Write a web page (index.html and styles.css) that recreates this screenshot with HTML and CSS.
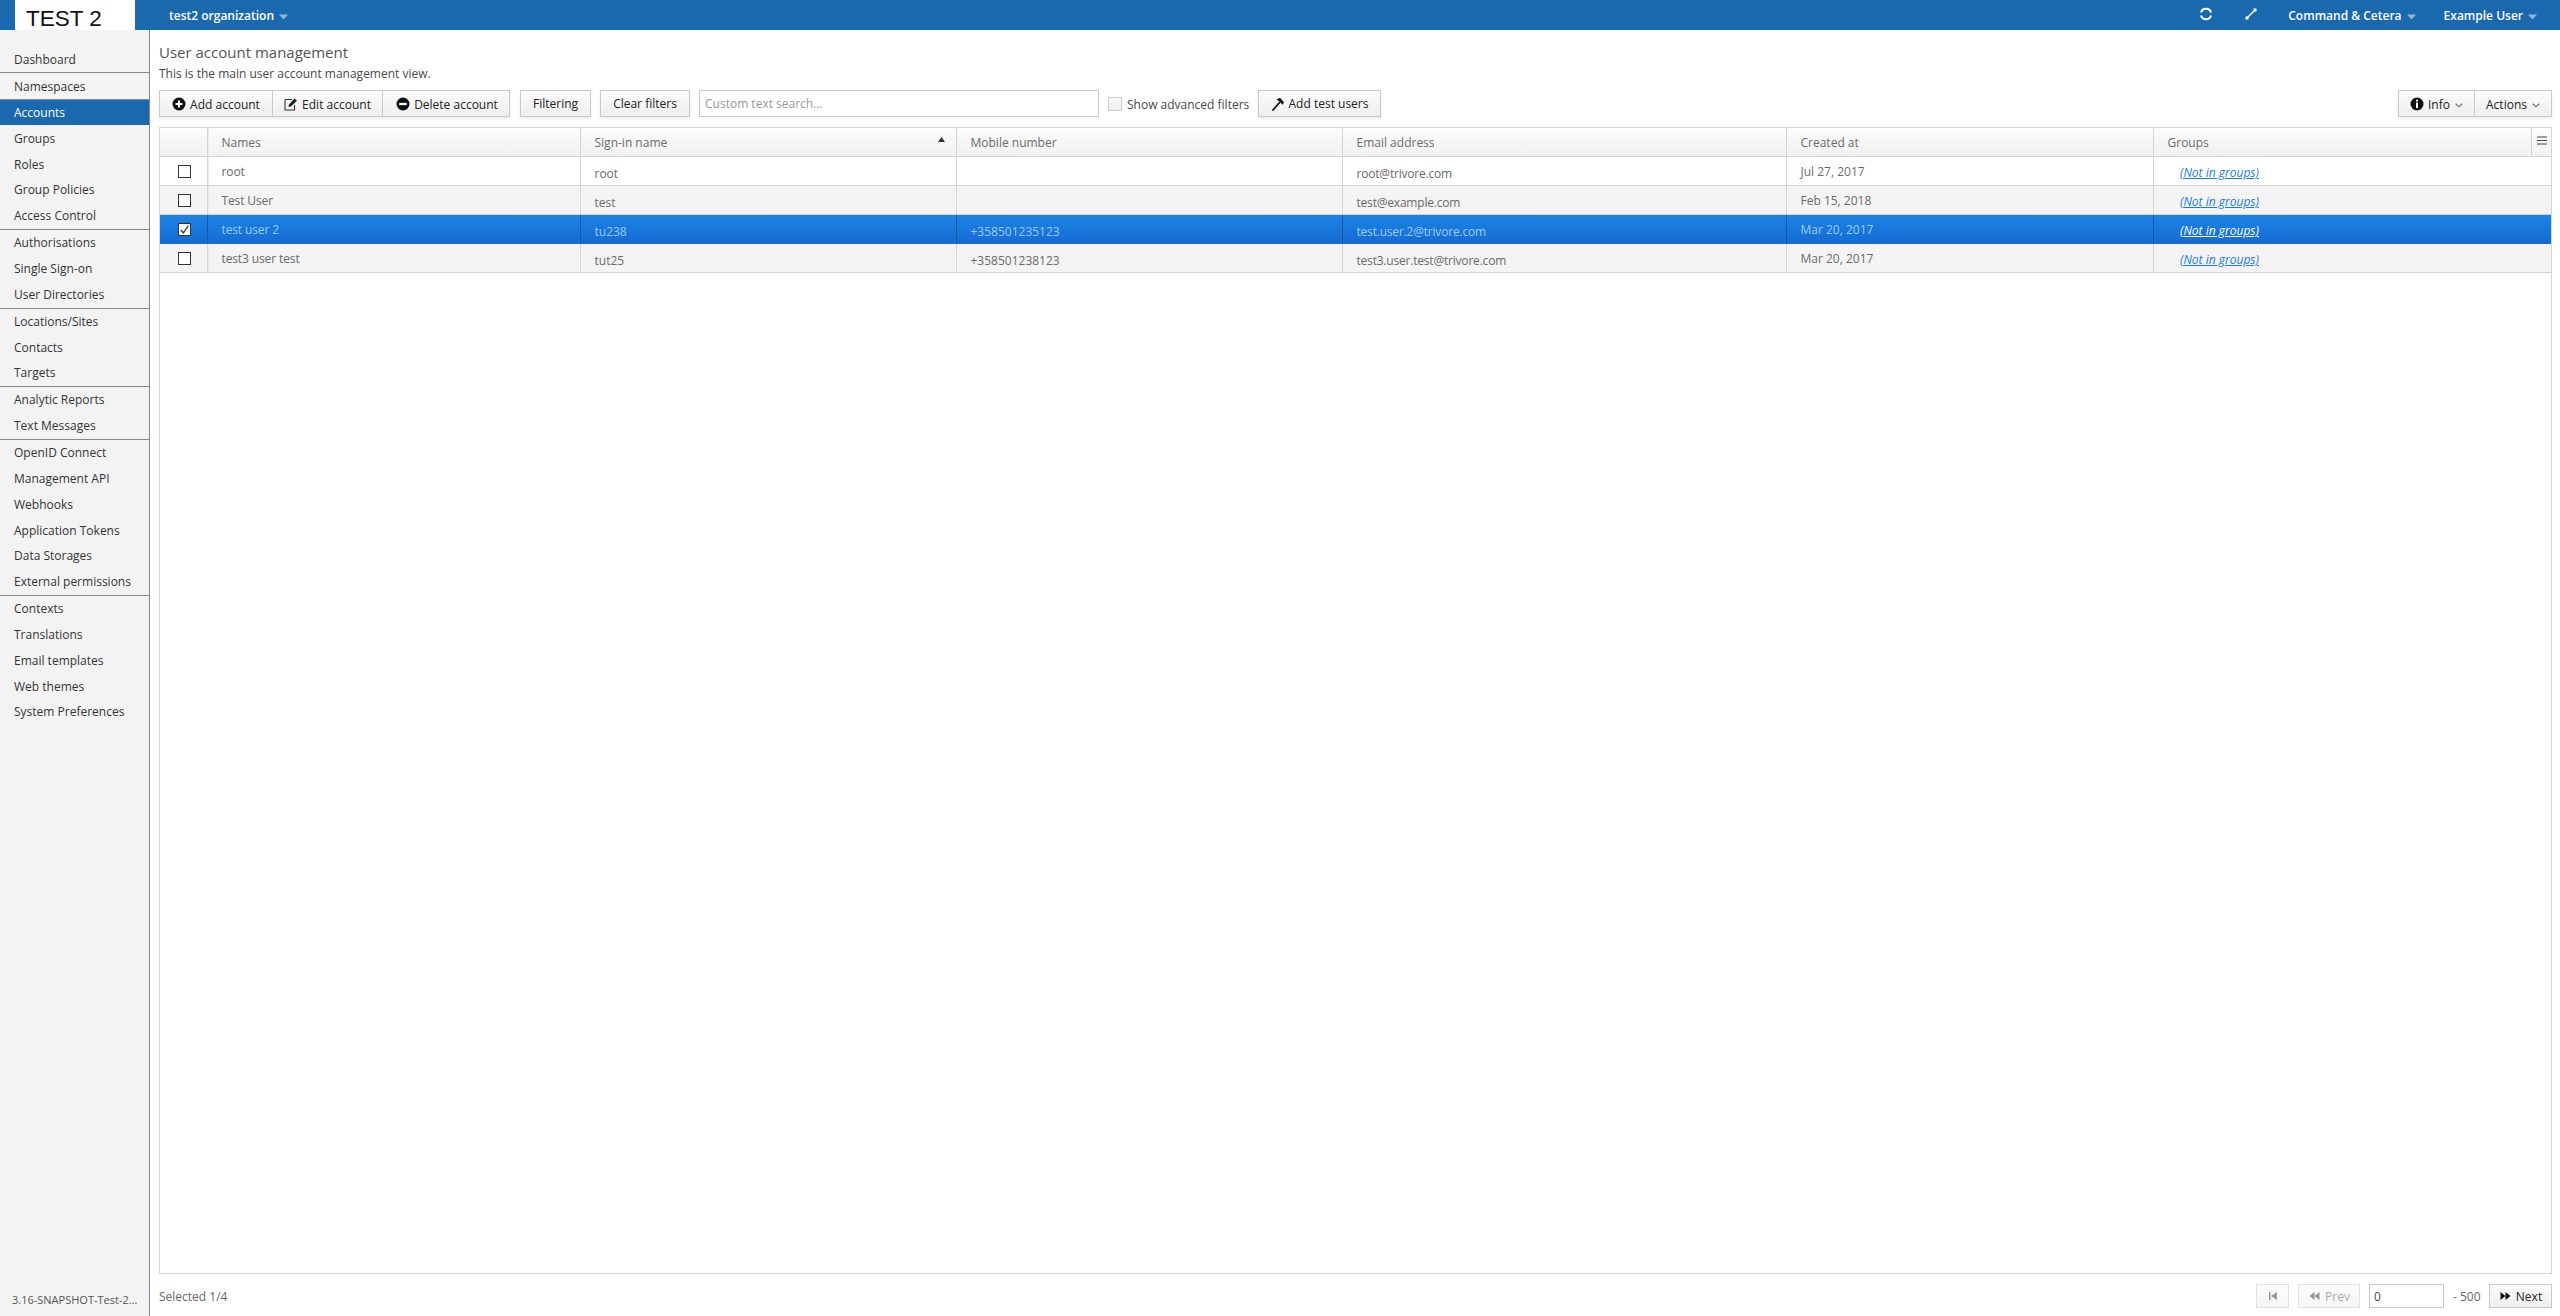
FILE: index.html
```html
<!DOCTYPE html>
<html lang="en">
<head>
<meta charset="utf-8">
<title>User account management</title>
<link rel="stylesheet" href="styles.css">
</head>
<body>
<header class="topbar">
  <div class="logo">TEST 2</div>
  <div class="top-item org">test2 organization<svg class="caret" viewBox="0 0 9 6"><path d="M0 0.5h9L4.500 5.500z"/></svg></div>
  <div class="top-right">
    <svg class="top-icon" viewBox="0 0 14 14"><path d="M2 5.500A5.200 5.200 0 0 1 12 5.500M12 8.500A5.200 5.200 0 0 1 2 8.500" fill="none" stroke="#fff" stroke-width="2"/></svg>
    <svg class="top-icon" viewBox="0 0 14 14"><path d="M3 11L11 3" stroke="#fff" stroke-width="1.500"/><path d="M9.500 1.500h3v3h-3zM1.500 9.500h3v3h-3z" fill="#fff"/></svg>
    <div class="top-item">Command &amp; Cetera<svg class="caret" viewBox="0 0 9 6"><path d="M0 0.5h9L4.500 5.500z"/></svg></div>
    <div class="top-item">Example User<svg class="caret" viewBox="0 0 9 6"><path d="M0 0.5h9L4.500 5.500z"/></svg></div>
  </div>
</header>
<div class="main">
  <aside class="sidebar">
    <nav class="nav">
      <a class="nav-item">Dashboard</a>
      <a class="nav-item sep">Namespaces</a>
      <a class="nav-item sep active">Accounts</a>
      <a class="nav-item">Groups</a>
      <a class="nav-item">Roles</a>
      <a class="nav-item">Group Policies</a>
      <a class="nav-item">Access Control</a>
      <a class="nav-item sep">Authorisations</a>
      <a class="nav-item">Single Sign-on</a>
      <a class="nav-item">User Directories</a>
      <a class="nav-item sep">Locations/Sites</a>
      <a class="nav-item">Contacts</a>
      <a class="nav-item">Targets</a>
      <a class="nav-item sep">Analytic Reports</a>
      <a class="nav-item">Text Messages</a>
      <a class="nav-item sep">OpenID Connect</a>
      <a class="nav-item">Management API</a>
      <a class="nav-item">Webhooks</a>
      <a class="nav-item">Application Tokens</a>
      <a class="nav-item">Data Storages</a>
      <a class="nav-item">External permissions</a>
      <a class="nav-item sep">Contexts</a>
      <a class="nav-item">Translations</a>
      <a class="nav-item">Email templates</a>
      <a class="nav-item">Web themes</a>
      <a class="nav-item">System Preferences</a>
    </nav>
    <div class="version">3.16-SNAPSHOT-Test-2...</div>
  </aside>
  <section class="content">
    <h1 class="title">User account management</h1>
    <p class="subtitle">This is the main user account management view.</p>
    <div class="toolbar">
      <div class="btn-group">
        <button class="btn w-add"><svg class="ico" viewBox="0 0 14 14"><circle cx="7" cy="7" r="6.500" fill="#111"/><path d="M7 3.500v7M3.500 7h7" stroke="#fff" stroke-width="2"/></svg>Add account</button>
        <button class="btn w-edit"><svg class="ico" viewBox="0 0 14 14"><path d="M1 2.500h7M1 2.500v10.500h9.500V8" fill="none" stroke="#333" stroke-width="1.100"/><path d="M4.500 10L5 7.500 10.500 1.500 13 3.800 7 9.500z" fill="#222"/></svg>Edit account</button>
        <button class="btn w-del"><svg class="ico" viewBox="0 0 14 14"><circle cx="7" cy="7" r="6.500" fill="#111"/><path d="M3.200 7h7.600" stroke="#fff" stroke-width="2.200"/></svg>Delete account</button>
      </div>
      <button class="btn solo w-filter">Filtering</button>
      <button class="btn solo w-clear">Clear filters</button>
      <input class="search" type="text" placeholder="Custom text search...">
      <label class="check-label"><span class="fake-check"></span>Show advanced filters</label>
      <button class="btn solo w-test"><svg class="ico" viewBox="0 0 14 14"><path d="M1.500 13.500L9 5" stroke="#111" stroke-width="1.800" fill="none"/><path d="M5.500 2.500L9 0.800l4 4.700-1.500 2.300L9 5z" fill="#111"/></svg>Add test users</button>
      <div class="btn-group push">
        <button class="btn w-info"><svg class="ico" viewBox="0 0 14 14"><circle cx="7" cy="7" r="6.500" fill="#111"/><path d="M7 5.500v5.500M7 2.800v1.600" stroke="#fff" stroke-width="2"/></svg>Info<svg class="chev" viewBox="0 0 8 5"><path d="M0.700 0.700L4 3.800 7.300 0.700" fill="none" stroke="#777" stroke-width="1.200"/></svg></button>
        <button class="btn w-actions">Actions<svg class="chev" viewBox="0 0 8 5"><path d="M0.700 0.700L4 3.800 7.300 0.700" fill="none" stroke="#777" stroke-width="1.200"/></svg></button>
      </div>
    </div>
    <div class="grid">
      <div class="row head">
        <div class="cell"></div>
        <div class="cell">Names</div>
        <div class="cell sorted">Sign-in name<svg class="sort" viewBox="0 0 7 5"><path d="M3.500 0L7 5H0z"/></svg></div>
        <div class="cell">Mobile number</div>
        <div class="cell">Email address</div>
        <div class="cell">Created at</div>
        <div class="cell">Groups</div>
        <div class="cell menu"><svg class="burger" viewBox="0 0 10 9"><path d="M0 1h10M0 4.500h10M0 8h10" stroke="#444" stroke-width="1"/></svg></div>
      </div>
      <div class="row">
        <div class="cell check"><span class="box"></span></div>
        <div class="cell up">root</div>
        <div class="cell">root</div>
        <div class="cell"></div>
        <div class="cell">root@trivore.com</div>
        <div class="cell up">Jul 27, 2017</div>
        <div class="cell link"><a>(Not in groups)</a></div>
      </div>
      <div class="row odd">
        <div class="cell check"><span class="box"></span></div>
        <div class="cell up">Test User</div>
        <div class="cell">test</div>
        <div class="cell"></div>
        <div class="cell">test@example.com</div>
        <div class="cell up">Feb 15, 2018</div>
        <div class="cell link"><a>(Not in groups)</a></div>
      </div>
      <div class="row selected">
        <div class="cell check"><span class="box"><svg class="tick" viewBox="0 0 10 10"><path d="M1.500 5.500L4 8 8.500 1.500" fill="none" stroke="#444" stroke-width="1.300"/></svg></span></div>
        <div class="cell up">test user 2</div>
        <div class="cell">tu238</div>
        <div class="cell">+358501235123</div>
        <div class="cell">test.user.2@trivore.com</div>
        <div class="cell up">Mar 20, 2017</div>
        <div class="cell link"><a>(Not in groups)</a></div>
      </div>
      <div class="row odd">
        <div class="cell check"><span class="box"></span></div>
        <div class="cell up">test3 user test</div>
        <div class="cell">tut25</div>
        <div class="cell">+358501238123</div>
        <div class="cell">test3.user.test@trivore.com</div>
        <div class="cell up">Mar 20, 2017</div>
        <div class="cell link"><a>(Not in groups)</a></div>
      </div>
    </div>
    <footer class="footer">
      <span class="selected-count">Selected 1/4</span>
      <div class="pager">
        <button class="btn small disabled w-first"><svg class="ico-sm" viewBox="0 0 10 10"><path d="M1 1h1.500v8H1zM9 1v8L3 5z"/></svg></button>
        <button class="btn small disabled w-prev"><svg class="ico-sm wide" viewBox="0 0 12 10"><path d="M6 1v8L1 5zM11 1v8L6 5z"/></svg>Prev</button>
        <input class="page-input" type="text" value="0">
        <span class="page-total">- 500</span>
        <button class="btn small w-next"><svg class="ico-sm wide" viewBox="0 0 12 10"><path d="M1 1v8l5-4zM6 1v8l5-4z"/></svg>Next</button>
      </div>
    </footer>
  </section>
</div>
</body>
</html>
```
FILE: styles.css
```css
* { box-sizing: border-box; }
html, body { height: 100%; }
body {
  margin: 0;
  height: 1316px;
  display: flex;
  flex-direction: column;
  overflow: hidden;
  font-family: "Open Sans", sans-serif;
  font-size: 12px;
  color: #474747;
  background: #fff;
}
.topbar {
  height: 30px;
  flex: none;
  display: flex;
  align-items: center;
  background: #1a69ae;
  color: #fff;
  padding-left: 15px;
}
.logo {
  width: 120px;
  height: 30px;
  background: #fff;
  color: #111;
  font-family: "Liberation Sans", sans-serif;
  font-size: 22.5px;
  line-height: 37px;
  padding-left: 11px;
}
.top-item {
  display: flex;
  align-items: center;
  font-weight: 600;
  font-size: 12px;
  line-height: 30px;
  padding-top: 1px;
  white-space: nowrap;
}
.org { margin-left: 34px; }
.caret { width: 9px; height: 6px; margin-left: 5px; fill: #8fb7dc; margin-top: 2px; }
.top-right {
  margin-left: auto;
  display: flex;
  align-items: center;
  padding-right: 23px;
}
.top-icon { width: 14px; height: 14px; margin-top: -2px; }
.top-icon + .top-icon { margin-left: 31px; }
.top-icon + .top-item { margin-left: 30px; }
.top-item + .top-item { margin-left: 28px; }
.main { flex: 1; display: flex; min-height: 0; }
.sidebar {
  width: 150px;
  flex: none;
  background: #f3f3f3;
  border-right: 1px solid #888;
  display: flex;
  flex-direction: column;
  padding-top: 16px;
}
.nav { display: flex; flex-direction: column; flex: 1; }
.nav-item {
  height: 25.800px;
  line-height: 25.800px;
  padding-left: 14px;
  color: #333;
  white-space: nowrap;
}
.nav-item.sep { border-top: 1px solid #888; height: 27px; }
.nav-item:first-child, .nav-item:nth-child(2) { padding-top: 1px; }
.nav-item.active {
  background: #1a69ae;
  color: #fff;
  height: 26px;
  margin-bottom: 1px;
}
.version {
  height: 28px;
  padding-left: 12px;
  color: #555;
  font-size: 11px;
  line-height: 24px;
}
.content {
  flex: 1;
  min-width: 0;
  display: flex;
  flex-direction: column;
  padding: 0 9px 0 9px;
}
.title {
  margin: 10px 0 0;
  height: 24px;
  font-size: 15px;
  font-weight: 400;
  line-height: 24px;
  color: #555;
}
.subtitle {
  margin: 0;
  height: 20px;
  font-size: 12px;
  line-height: 20px;
  color: #474747;
}
.toolbar {
  margin-top: 6px;
  height: 27px;
  display: flex;
  align-items: stretch;
}
.btn-group { display: flex; box-shadow: 0 2px 3px rgba(0,0,0,.08); }
.btn-group .btn { box-shadow: none; padding-top: 1px; }
.btn-group .btn + .btn { border-left: 0; }
.push { margin-left: auto; margin-right: -1px; }
.btn {
  display: inline-flex;
  align-items: center;
  justify-content: center;
  padding: 0;
  height: 27px;
  border: 1px solid #c9c9c9;
  background: linear-gradient(#fbfbfb, #efefef);
  color: #222;
  font-family: inherit;
  font-size: 12px;
  white-space: nowrap;
}
.solo { box-shadow: 0 2px 3px rgba(0,0,0,.08); }
.ico { width: 14px; height: 14px; margin-right: 4px; flex: none; }
.chev { width: 8px; height: 5px; margin-left: 5px; margin-top: 2px; }
.w-add { width: 114px; }
.w-edit { width: 110px; }
.w-del { width: 127px; padding-left: 2px; }
.w-filter { width: 71px; margin-left: 10px; }
.w-clear { width: 90px; margin-left: 9px; }
.search {
  width: 400px;
  margin-left: 9px;
  border: 1px solid #c9c9c9;
  padding: 0 5px;
  font-family: inherit;
  font-size: 12px;
  color: #474747;
}
.search::placeholder { color: #999; opacity: 1; }
.check-label {
  display: flex;
  align-items: center;
  margin-left: 9px;
  color: #474747;
  white-space: nowrap;
  width: 150px;
  padding-top: 2px;
}
.fake-check {
  width: 14px;
  height: 14px;
  margin-right: 5px;
  border: 1px solid #ccc;
  border-radius: 1px;
  background: linear-gradient(#fafafa, #efefef);
  margin-top: -2px;
}
.w-test { width: 123px; }
.w-info { width: 77px; }
.w-actions { width: 77px; }
.grid {
  flex: 1;
  margin-top: 10px;
  border: 1px solid #d4d4d4;
  min-height: 0;
  margin-right: -1px;
}
.row {
  display: grid;
  grid-template-columns: 48px 373px 376px 386px 444px 367px 1fr;
  height: 29px;
  border-bottom: 1px solid #d4d4d4;
  background: #fff;
  color: #6a6a6a;
}
.cell {
  display: flex;
  align-items: center;
  min-width: 0;
  padding-left: 13.500px;
  border-right: 1px solid #d4d4d4;
  padding-top: 4px;
  white-space: nowrap;
}
.cell:first-child {
  padding-left: 0;
  box-shadow: 1px 0 0 #ececec;
}
.cell:last-child { border-right: 0; }
.cell.up { padding-top: 1px; }
.row .cell:nth-child(2) { letter-spacing: -0.12px; }
.row .cell:nth-child(5) { letter-spacing: -0.2px; }
.row.head .cell { letter-spacing: 0; }
.row.head {
  grid-template-columns: 48px 373px 376px 386px 444px 367px 378px 1fr;
  background: linear-gradient(#fcfcfc, #f1f1f1);
  color: #6a6a6a;
  height: 29px;
}
.row.head .cell { padding-top: 1px; }
.menu { justify-content: center; padding: 0 !important; }
.burger { width: 10px; height: 9px; margin-top: -3px; }
.sorted { position: relative; }
.sort { position: absolute; right: 11px; top: 9px; width: 7px; height: 5px; fill: #333; }
.row.odd { background: #f4f4f4; }
.row.selected {
  background: linear-gradient(#1b84e3, #166bd4);
  color: #9cccf5;
  border-bottom-color: #166bd4;
}
.row.selected .cell { border-right-color: #125aa8; }
.row.selected .cell:first-child { box-shadow: none; }
.row.selected .cell:last-child { border-right: 0; }
.row.selected a { color: #fff; }
.check { justify-content: center; padding: 0 0 0 1px !important; }
.box {
  width: 13px;
  height: 13px;
  border: 1px solid #333;
  background: #fff;
  display: block;
}
.tick { display: block; width: 11px; height: 11px; }
.cell.link { padding-left: 26px; padding-top: 3px; }
.link a { font-style: italic; color: #197de1; text-decoration: underline; }
.footer {
  height: 42px;
  display: flex;
  align-items: center;
  justify-content: space-between;
  flex: none;
  padding-top: 2px;
}
.selected-count { color: #666; padding-top: 1px; }
.pager { display: flex; align-items: center; margin-right: -1px; }
.small { height: 24px; font-size: 12px; }
.disabled { opacity: .55; color: #666; }
.disabled .ico-sm { fill: #444; }
.ico-sm { width: 10px; height: 10px; fill: #111; flex: none; }
.ico-sm.wide { width: 13px; margin-right: 4px; }
.w-first { width: 33px; }
.w-prev { width: 62px; margin-left: 9px; }
.page-input {
  width: 75px;
  height: 24px;
  margin-left: 9px;
  border: 1px solid #c9c9c9;
  padding: 0 4px;
  font-family: inherit;
  font-size: 12px;
  color: #474747;
}
.page-total { margin-left: 9px; width: 36px; color: #666; }
.w-next { width: 63px; }
```
